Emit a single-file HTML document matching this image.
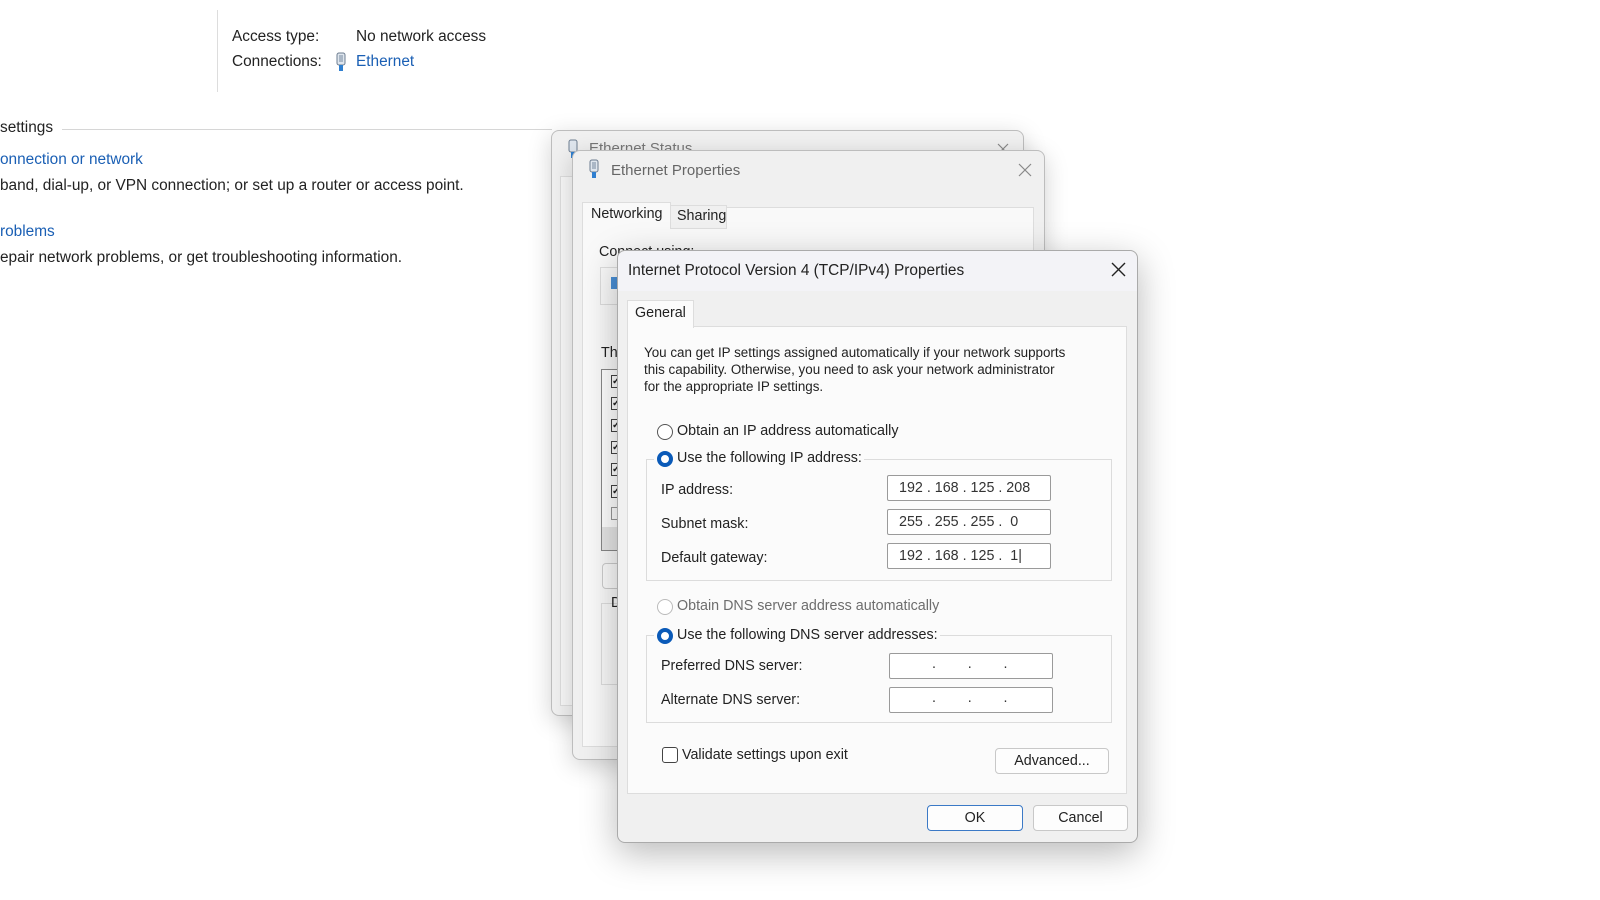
<!DOCTYPE html>
<html><head><meta charset="utf-8">
<style>
*{box-sizing:border-box;margin:0;padding:0}
body{width:1600px;height:900px;background:#fff;position:relative;overflow:hidden;font-family:"Liberation Sans",sans-serif;color:#222}
.a{position:absolute;white-space:nowrap}
.t15{font-size:15.4px}
.t14{font-size:14.3px}
.t13{font-size:13.4px}
.blue{color:#1a5fb4}
.win{position:absolute;border:1px solid #bdbdbd;border-radius:8px;background:#f0f0f0}
.field{position:absolute;height:26px;background:#fff;border:1px solid #9a9a9a;border-radius:2px;font-size:14.3px;color:#333}
.grp{position:absolute;border:1px solid #dcdcdc}
.radio{position:absolute;width:16px;height:16px;border-radius:50%;border:1px solid #555;background:#fff}
.radio.on{border:4px solid #0a5ab8}
.radio.dis{border-color:#bbb}
.btn{position:absolute;height:26px;border:1px solid #c8c8c8;border-radius:4px;background:#fdfdfd;font-size:14.3px;text-align:center;line-height:24px}
.cb{position:absolute;width:10px;height:13px;border:1px solid #444;background:#fff;font-size:10px;line-height:11px;font-weight:bold}
</style></head><body>

<div class="a" style="left:217px;top:10px;width:1px;height:82px;background:#ddd"></div>
<div class="a t15" style="left:232px;top:28px">Access type:</div>
<div class="a t15" style="left:356px;top:28px">No network access</div>
<div class="a t15" style="left:232px;top:53px">Connections:</div>
<svg class="a" style="left:335px;top:52px" width="12" height="20" viewBox="0 0 12 20"><rect x="2" y="1" width="8" height="12" rx="2" fill="#dfe6ee" stroke="#6d7d90"/><rect x="4" y="3" width="4" height="7" fill="#aab7c6"/><rect x="4" y="13" width="4" height="6" fill="#2f7fd0"/></svg>
<div class="a t15 blue" style="left:356px;top:53px">Ethernet</div>

<div class="a t15" style="left:0;top:119px">settings</div>
<div class="a" style="left:62px;top:129px;width:490px;height:1px;background:#d6d6d6"></div>
<div class="a t15 blue" style="left:0;top:151px">onnection or network</div>
<div class="a t15" style="left:0;top:177px">band, dial-up, or VPN connection; or set up a router or access point.</div>
<div class="a t15 blue" style="left:0;top:223px">roblems</div>
<div class="a t15" style="left:0;top:249px">epair network problems, or get troubleshooting information.</div>

<div class="win" style="left:551px;top:130px;width:473px;height:586px;box-shadow:0 6px 24px rgba(0,0,0,.18)">
  <svg class="a" style="left:15px;top:8px" width="12" height="20" viewBox="0 0 12 20"><rect x="2" y="1" width="8" height="12" rx="2" fill="#dfe6ee" stroke="#6d7d90"/><rect x="4" y="13" width="4" height="6" fill="#2f7fd0"/></svg>
  <div class="a" style="left:37px;top:9px;font-size:15px;color:#777">Ethernet Status</div>
  <svg class="a" style="left:445px;top:12px" width="12" height="12"><path d="M1 1L11 11M11 1L1 11" stroke="#888" stroke-width="1.2"/></svg>
  <div class="a" style="left:8px;top:45px;width:457px;height:530px;border:1px solid #ddd;background:#f7f7f7"></div>
</div>

<div class="win" style="left:572px;top:150px;width:473px;height:610px;box-shadow:0 6px 24px rgba(0,0,0,.18)">
  <svg class="a" style="left:15px;top:8px" width="12" height="20" viewBox="0 0 12 20"><rect x="2" y="1" width="8" height="12" rx="2" fill="#dfe6ee" stroke="#6d7d90"/><rect x="4" y="3" width="4" height="7" fill="#aab7c6"/><rect x="4" y="13" width="4" height="6" fill="#2f7fd0"/></svg>
  <div class="a" style="left:38px;top:11px;font-size:15px;color:#666">Ethernet Properties</div>
  <svg class="a" style="left:445px;top:12px" width="14" height="14"><path d="M1 1L13 13M13 1L1 13" stroke="#888" stroke-width="1.2"/></svg>
  <div class="a" style="left:9px;top:56px;width:452px;height:540px;border:1px solid #ddd;background:#f9f9f9"></div>
  <div class="a" style="left:9px;top:51px;width:89px;height:27px;background:#f9f9f9;border:1px solid #ddd;border-bottom:none"></div>
  <div class="a t14" style="left:18px;top:55px">Networking</div>
  <div class="a" style="left:98px;top:54px;width:56px;height:24px;border:1px solid #ddd;border-left:none;background:#f0f0f0"></div>
  <div class="a t14" style="left:104px;top:57px">Sharing</div>
  <div class="a t14" style="left:26px;top:93px">Connect using:</div>
  <div class="a" style="left:27px;top:116px;width:40px;height:38px;border:1px solid #ddd"></div>
  <div class="a" style="left:38px;top:126px;width:6px;height:12px;background:#4a8fd6"></div>
  <div class="a t14" style="left:28px;top:194px">Th</div>
  <div class="a" style="left:28px;top:218px;width:30px;height:182px;border:1px solid #888;background:#fff"></div>
  <div class="cb" style="left:38px;top:224px">✓</div><div class="cb" style="left:38px;top:246px">✓</div><div class="cb" style="left:38px;top:268px">✓</div><div class="cb" style="left:38px;top:290px">✓</div><div class="cb" style="left:38px;top:312px">✓</div><div class="cb" style="left:38px;top:334px">✓</div><div class="cb" style="left:38px;top:356px;border-color:#999"></div>
  <div class="a" style="left:29px;top:376px;width:28px;height:23px;background:#e6e6e6"></div>
  <div class="a" style="left:29px;top:412px;width:30px;height:26px;border:1px solid #ccc;border-radius:4px;background:#fbfbfb"></div>
  <div class="a" style="left:28px;top:452px;width:30px;height:82px;border:1px solid #ddd"></div>
  <div class="a t14" style="left:38px;top:444px">D</div>
</div>

<div class="win" style="left:617px;top:250px;width:521px;height:593px;background:#f0f0f0;border-color:#aaa;box-shadow:0 10px 36px rgba(0,0,0,.28)">
  <div class="a" style="left:0;top:0;width:519px;height:40px;background:#f3f3f7;border-radius:8px 8px 0 0"></div>
  <div class="a" style="left:10px;top:11px;font-size:15.4px;color:#222">Internet Protocol Version 4 (TCP/IPv4) Properties</div>
  <svg class="a" style="left:493px;top:11px" width="15" height="15"><path d="M1 1L14 14M14 1L1 14" stroke="#222" stroke-width="1.4"/></svg>
  <div class="a" style="left:9px;top:75px;width:500px;height:468px;background:#fbfbfb;border:1px solid #ddd"></div>
  <div class="a" style="left:9px;top:49px;width:67px;height:28px;background:#fbfbfb;border:1px solid #ddd;border-bottom:none"></div>
  <div class="a t14" style="left:17px;top:54px">General</div>
  <div class="a t13" style="left:26px;top:93px;line-height:17px;color:#222">You can get IP settings assigned automatically if your network supports<br>this capability. Otherwise, you need to ask your network administrator<br>for the appropriate IP settings.</div>

  <div class="radio" style="left:39px;top:173px"></div>
  <div class="a t14" style="left:59px;top:172px">Obtain an IP address automatically</div>

  <div class="grp" style="left:28px;top:208px;width:466px;height:122px"></div>
  <div class="a" style="left:36px;top:196px;width:210px;height:22px;background:#fbfbfb"></div>
  <div class="radio on" style="left:39px;top:200px"></div>
  <div class="a t14" style="left:59px;top:199px">Use the following IP address:</div>
  <div class="a t14" style="left:43px;top:231px">IP address:</div>
  <div class="a t14" style="left:43px;top:265px">Subnet mask:</div>
  <div class="a t14" style="left:43px;top:299px">Default gateway:</div>
  <div class="field" style="left:269px;top:224px;width:164px"><span class="a" style="left:11px;top:4px">192 . 168 . 125 . 208</span></div>
  <div class="field" style="left:269px;top:258px;width:164px"><span class="a" style="left:11px;top:4px">255 . 255 . 255 .&nbsp;&nbsp;0</span></div>
  <div class="field" style="left:269px;top:292px;width:164px"><span class="a" style="left:11px;top:4px">192 . 168 . 125 .&nbsp;&nbsp;1|</span></div>

  <div class="radio dis" style="left:39px;top:348px"></div>
  <div class="a t14" style="left:59px;top:347px;color:#6d6d6d">Obtain DNS server address automatically</div>

  <div class="grp" style="left:28px;top:384px;width:466px;height:88px"></div>
  <div class="a" style="left:36px;top:372px;width:286px;height:22px;background:#fbfbfb"></div>
  <div class="radio on" style="left:39px;top:377px"></div>
  <div class="a t14" style="left:59px;top:376px">Use the following DNS server addresses:</div>
  <div class="a t14" style="left:43px;top:407px">Preferred DNS server:</div>
  <div class="a t14" style="left:43px;top:441px">Alternate DNS server:</div>
  <div class="field" style="left:271px;top:402px;width:164px"><span class="a" style="left:42px;top:2px">.&nbsp;&nbsp;&nbsp;&nbsp;&nbsp;&nbsp;&nbsp;&nbsp;.&nbsp;&nbsp;&nbsp;&nbsp;&nbsp;&nbsp;&nbsp;&nbsp;.</span></div>
  <div class="field" style="left:271px;top:436px;width:164px"><span class="a" style="left:42px;top:2px">.&nbsp;&nbsp;&nbsp;&nbsp;&nbsp;&nbsp;&nbsp;&nbsp;.&nbsp;&nbsp;&nbsp;&nbsp;&nbsp;&nbsp;&nbsp;&nbsp;.</span></div>

  <div class="a" style="left:44px;top:496px;width:16px;height:16px;border:1px solid #444;border-radius:3px;background:#fff"></div>
  <div class="a t14" style="left:64px;top:496px">Validate settings upon exit</div>
  <div class="btn" style="left:377px;top:497px;width:114px">Advanced...</div>

  <div class="btn" style="left:309px;top:554px;width:96px;border:1px solid #3b79c6">OK</div>
  <div class="btn" style="left:415px;top:554px;width:95px">Cancel</div>
</div>

</body></html>
